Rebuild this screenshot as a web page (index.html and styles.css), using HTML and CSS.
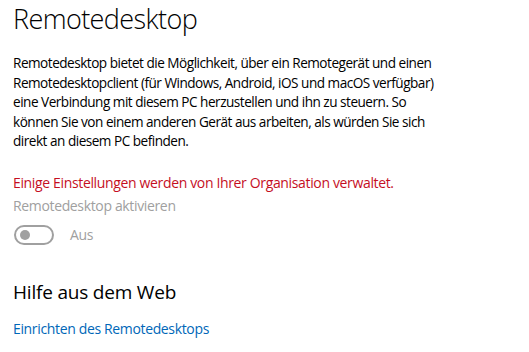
FILE: index.html
```html
<!DOCTYPE html>
<html lang="de">
<head>
    <meta charset="UTF-8">
    <meta name="viewport" content="width=device-width, initial-scale=1.0">
    <title>Remotedesktop</title>
    <link rel="stylesheet" href="styles.css">
</head>
<body>
    <div class="page">
        <h1 class="title">Remotedesktop</h1>
        <p class="description">
            Remotedesktop bietet die Möglichkeit, über ein Remotegerät und einen<br>
            Remotedesktopclient (für Windows, Android, iOS und macOS verfügbar)<br>
            eine Verbindung mit diesem PC herzustellen und ihn zu steuern. So<br>
            können Sie von einem anderen Gerät aus arbeiten, als würden Sie sich<br>
            direkt an diesem PC befinden.
        </p>
        <p class="policy">Einige Einstellungen werden von Ihrer Organisation verwaltet.</p>
        <div class="setting">
            <div class="setting-label">Remotedesktop aktivieren</div>
            <div class="toggle-row">
                <span class="toggle"><span class="knob"></span></span>
                <span class="toggle-text">Aus</span>
            </div>
        </div>
        <h2 class="subtitle">Hilfe aus dem Web</h2>
        <a class="link" href="#">Einrichten des Remotedesktops</a>
    </div>
</body>
</html>
```

FILE: styles.css
```css
body {
    margin: 0;
    padding: 0;
    font-family: "Open Sans", "Noto Sans", sans-serif;
    background-color: #ffffff;
    color: #000000;
    letter-spacing: -0.35px;
}
.page {
    padding: 0 13px;
}
.title {
    margin: 0;
    padding-top: 1px;
    font-size: 27px;
    font-weight: 300;
    line-height: 36px;
    letter-spacing: -0.6px;
}
.description {
    margin: 16px 0 0 0;
    font-size: 13.6px;
    line-height: 19.5px;
    letter-spacing: -0.5px;
}
.policy {
    margin: 22px 0 0 0;
    font-size: 14px;
    line-height: 20px;
    color: #c50f1f;
}
.setting-label {
    margin-top: 3px;
    font-size: 14px;
    line-height: 20px;
    color: #a0a0a0;
}
.toggle-row {
    display: flex;
    align-items: center;
    gap: 16px;
    margin-top: 9px;
    padding-left: 1px;
}
.toggle {
    box-sizing: border-box;
    width: 40px;
    height: 20px;
    border: 2px solid #a0a0a0;
    border-radius: 10px;
    display: flex;
    align-items: center;
    padding-left: 4px;
}
.knob {
    width: 10px;
    height: 10px;
    border-radius: 50%;
    background-color: #a0a0a0;
}
.toggle-text {
    font-size: 14px;
    color: #a0a0a0;
}
.subtitle {
    margin: 33px 0 0 0;
    font-size: 19px;
    font-weight: 400;
    line-height: 28px;
    letter-spacing: -0.2px;
}
.link {
    display: inline-block;
    margin-top: 13px;
    font-size: 14px;
    color: #0067b8;
    text-decoration: none;
}
```
